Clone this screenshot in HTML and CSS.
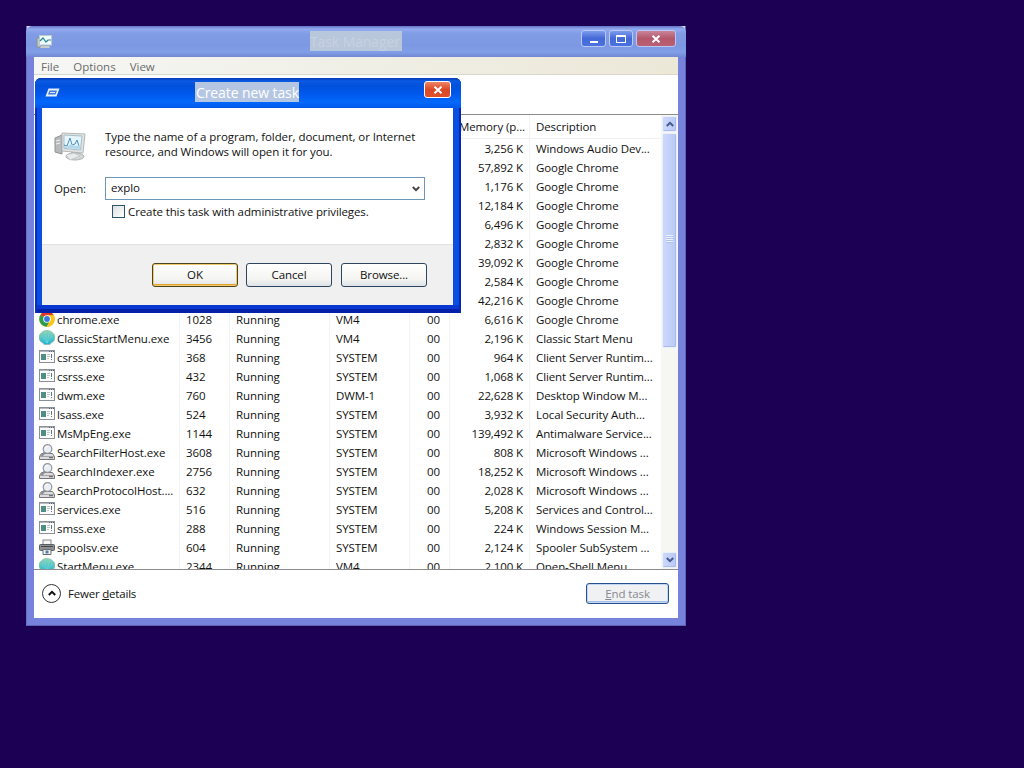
FILE: index.html
```html
<!DOCTYPE html>
<html lang="en">
<head>
  <meta charset="UTF-8" />
  <title>Task Manager</title>
  <link rel="stylesheet" href="styles.css">
</head>
<body>

<!-- Shared icons -->
<svg class="defs" width="0" height="0">
  <defs>
    <linearGradient id="teal" x1="0" y1="0" x2="0" y2="1">
      <stop offset="0" stop-color="#8fd8b8"/><stop offset="1" stop-color="#1fb4d2"/>
    </linearGradient>
    <symbol id="i-chrome" viewBox="0 0 16 16">
      <circle cx="8" cy="8" r="7.8" fill="#f9c51d"/>
      <path d="M8 8L1.3 4.1A7.8 7.8 0 0 1 14.8 4.3H8z" fill="#dc3a2c"/>
      <path d="M8 8L1.3 4.1A7.8 7.8 0 0 0 7.6 15.8L11.2 9.8z" fill="#2c9c4c"/>
      <path d="M8 4.3h6.8A7.8 7.8 0 0 1 7.6 15.8L11.2 9.8z" fill="#f9c51d"/>
      <circle cx="8" cy="8" r="3.8" fill="#fff"/>
      <circle cx="8" cy="8" r="2.9" fill="#3b78dc"/>
    </symbol>
    <symbol id="i-shell" viewBox="0 0 16 16">
      <path d="M5 14.500L4 13C-1 11-1 5 2.500 2.800C5-.3 11-.3 13.500 2.800C17 5 17 11 12 13L11 14.500z" fill="url(#teal)" stroke="#86b9a4" stroke-width=".7"/>
      <path d="M8 13L3 6M8 13L6 4M8 13L10 4M8 13L13 6" stroke="#7fdfe4" stroke-width=".5" fill="none"/>
    </symbol>
    <symbol id="i-app" viewBox="0 0 16 13">
      <rect x=".5" y=".5" width="15" height="12" fill="#fbfbfb" stroke="#8b9199"/>
      <path d="M1 1.500h14" stroke="#b4b9c0"/>
      <path d="M10 1.500h1M12 1.500h1M14 1.500h1" stroke="#5c626b"/>
      <rect x="2" y="4" width="5" height="6" fill="#4f8f83"/>
      <path d="M8 4.500h3M8 6.500h3M8 8.500h2" stroke="#bcc4c8"/>
      <path d="M12.500 4v4M12.500 9v1" stroke="#5d7a80"/>
    </symbol>
    <symbol id="i-search" viewBox="0 0 16 16">
      <path d="M2.500 9.500h11l2 3v3H.5v-3z" fill="#dcdcdf" stroke="#77777b"/>
      <path d="M1 12.500h14" stroke="#a5a5a8"/>
      <path d="M10 13.700h4" stroke="#555"/>
      <path d="M6 8L2.500 12" stroke="#8c8c90" stroke-width="2"/>
      <circle cx="8.500" cy="5" r="4.300" fill="#e9eff4" stroke="#92969c" stroke-width="1.200"/>
      <path d="M6 4.500a2.700 2.700 0 0 1 3-2" stroke="#fff" fill="none"/>
    </symbol>
    <symbol id="i-printer" viewBox="0 0 16 16">
      <rect x="4" y="1" width="8" height="5" fill="#f6f6f6" stroke="#8a8a8a"/>
      <rect x=".5" y="5.500" width="15" height="6" rx="1" fill="#8d9092" stroke="#5b5e60"/>
      <path d="M2 7.500h12" stroke="#44474a"/>
      <path d="M4 10.500h8v5H4z" fill="#eef3f7" stroke="#6a6d70"/>
      <rect x="6.500" y="11.500" width="3" height="3" fill="#5480a0"/>
    </symbol>
    <symbol id="i-x" viewBox="0 0 10 8">
      <path d="M1.500 .8L8.500 7.200M8.500 .8L1.500 7.200" stroke="#fff" stroke-width="2.100"/>
    </symbol>
    <symbol id="i-chev" viewBox="0 0 8 6">
      <path d="M.8 1L4 4.200L7.200 1" fill="none" stroke="currentColor" stroke-width="2"/>
    </symbol>
  </defs>
</svg>

<div class="window">
  <div class="titlebar">
    <svg class="title-icon" width="16" height="15" viewBox="0 0 16 15">
      <path d="M1 4h4v9H1z" fill="#c8c8c4" stroke="#8b9098"/>
      <path d="M5 12h8l1 2H4z" fill="#c9ccc8"/>
      <rect x="3.500" y="1.500" width="12" height="9.500" fill="#eefcfc" stroke="#b9c9cf"/>
      <path d="M4 7l3-3 3 4 2-2h3" fill="none" stroke="#2a8792" stroke-width="1.200"/>
    </svg>
    <span class="title">Task Manager</span>
    <div class="win-btns">
      <span class="wbtn min"><i></i></span>
      <span class="wbtn max"><i></i></span>
      <span class="wbtn close"><svg width="10" height="8"><use href="#i-x"/></svg></span>
    </div>
  </div>

  <div class="client">
    <div class="menu"><span>File</span><span>Options</span><span>View</span></div>
    <div class="tabs"></div>

    <div class="list">
      <table>
        <colgroup><col class="c-name"><col class="c-pid"><col class="c-status"><col class="c-user"><col class="c-cpu"><col class="c-mem"><col class="c-desc"></colgroup>
        <tr class="head"><th></th><th></th><th></th><th></th><th></th><th class="num">Memory (p...</th><th>Description</th></tr>
        <tr><td></td><td></td><td></td><td></td><td></td><td class="num">3,256 K</td><td>Windows Audio Dev...</td></tr>
        <tr><td></td><td></td><td></td><td></td><td></td><td class="num">57,892 K</td><td>Google Chrome</td></tr>
        <tr><td></td><td></td><td></td><td></td><td></td><td class="num">1,176 K</td><td>Google Chrome</td></tr>
        <tr><td></td><td></td><td></td><td></td><td></td><td class="num">12,184 K</td><td>Google Chrome</td></tr>
        <tr><td></td><td></td><td></td><td></td><td></td><td class="num">6,496 K</td><td>Google Chrome</td></tr>
        <tr><td></td><td></td><td></td><td></td><td></td><td class="num">2,832 K</td><td>Google Chrome</td></tr>
        <tr><td></td><td></td><td></td><td></td><td></td><td class="num">39,092 K</td><td>Google Chrome</td></tr>
        <tr><td></td><td></td><td></td><td></td><td></td><td class="num">2,584 K</td><td>Google Chrome</td></tr>
        <tr><td></td><td></td><td></td><td></td><td></td><td class="num">42,216 K</td><td>Google Chrome</td></tr>
        <tr><td><svg class="ico"><use href="#i-chrome"/></svg>chrome.exe</td><td>1028</td><td>Running</td><td>VM4</td><td class="cpu">00</td><td class="num">6,616 K</td><td>Google Chrome</td></tr>
        <tr><td><svg class="ico"><use href="#i-shell"/></svg>ClassicStartMenu.exe</td><td>3456</td><td>Running</td><td>VM4</td><td class="cpu">00</td><td class="num">2,196 K</td><td>Classic Start Menu</td></tr>
        <tr><td><svg class="ico app"><use href="#i-app"/></svg>csrss.exe</td><td>368</td><td>Running</td><td>SYSTEM</td><td class="cpu">00</td><td class="num">964 K</td><td>Client Server Runtim...</td></tr>
        <tr><td><svg class="ico app"><use href="#i-app"/></svg>csrss.exe</td><td>432</td><td>Running</td><td>SYSTEM</td><td class="cpu">00</td><td class="num">1,068 K</td><td>Client Server Runtim...</td></tr>
        <tr><td><svg class="ico app"><use href="#i-app"/></svg>dwm.exe</td><td>760</td><td>Running</td><td>DWM-1</td><td class="cpu">00</td><td class="num">22,628 K</td><td>Desktop Window M...</td></tr>
        <tr><td><svg class="ico app"><use href="#i-app"/></svg>lsass.exe</td><td>524</td><td>Running</td><td>SYSTEM</td><td class="cpu">00</td><td class="num">3,932 K</td><td>Local Security Auth...</td></tr>
        <tr><td><svg class="ico app"><use href="#i-app"/></svg>MsMpEng.exe</td><td>1144</td><td>Running</td><td>SYSTEM</td><td class="cpu">00</td><td class="num">139,492 K</td><td>Antimalware Service...</td></tr>
        <tr><td><svg class="ico"><use href="#i-search"/></svg>SearchFilterHost.exe</td><td>3608</td><td>Running</td><td>SYSTEM</td><td class="cpu">00</td><td class="num">808 K</td><td>Microsoft Windows ...</td></tr>
        <tr><td><svg class="ico"><use href="#i-search"/></svg>SearchIndexer.exe</td><td>2756</td><td>Running</td><td>SYSTEM</td><td class="cpu">00</td><td class="num">18,252 K</td><td>Microsoft Windows ...</td></tr>
        <tr><td><svg class="ico"><use href="#i-search"/></svg>SearchProtocolHost....</td><td>632</td><td>Running</td><td>SYSTEM</td><td class="cpu">00</td><td class="num">2,028 K</td><td>Microsoft Windows ...</td></tr>
        <tr><td><svg class="ico app"><use href="#i-app"/></svg>services.exe</td><td>516</td><td>Running</td><td>SYSTEM</td><td class="cpu">00</td><td class="num">5,208 K</td><td>Services and Control...</td></tr>
        <tr><td><svg class="ico app"><use href="#i-app"/></svg>smss.exe</td><td>288</td><td>Running</td><td>SYSTEM</td><td class="cpu">00</td><td class="num">224 K</td><td>Windows Session M...</td></tr>
        <tr><td><svg class="ico"><use href="#i-printer"/></svg>spoolsv.exe</td><td>604</td><td>Running</td><td>SYSTEM</td><td class="cpu">00</td><td class="num">2,124 K</td><td>Spooler SubSystem ...</td></tr>
        <tr><td><svg class="ico"><use href="#i-shell"/></svg>StartMenu.exe</td><td>2344</td><td>Running</td><td>VM4</td><td class="cpu">00</td><td class="num">2,100 K</td><td>Open-Shell Menu</td></tr>
      </table>
      <div class="scroll">
        <span class="arrow up"><svg width="8" height="6"><use href="#i-chev"/></svg></span>
        <span class="thumb"><i></i></span>
        <span class="arrow down"><svg width="8" height="6"><use href="#i-chev"/></svg></span>
      </div>
    </div>

    <div class="bottom">
      <span class="circle"><svg width="8" height="6"><use href="#i-chev"/></svg></span>
      <span class="fewer">Fewer <u>d</u>etails</span>
      <span class="btn end"><u>E</u>nd task</span>
    </div>
  </div>
</div>

<!-- Run dialog -->
<div class="dialog">
  <div class="dlg-title">
    <svg class="dlg-icon" width="15" height="9" viewBox="0 0 15 9">
      <path d="M3.500 .5h11l-3 8H.5z" fill="#e6f0ff"/>
      <path d="M4.500 2.500h7.500l-1.500 4H3z" fill="#3f78d8"/>
      <path d="M5 4.500h5" stroke="#dfeaff"/>
    </svg>
    <span class="title">Create new task</span>
    <span class="dlg-close"><svg width="10" height="8"><use href="#i-x"/></svg></span>
  </div>
  <div class="dlg-body">
    <div class="intro">
      <svg class="pc" width="32" height="30" viewBox="0 0 32 30">
        <path d="M1 7l7-3v19l-7-2z" fill="#b7b9ba" stroke="#909394"/>
        <path d="M2 10l4-1M2 13l4-1" stroke="#f4f4f4"/>
        <path d="M8 2l23 1-2 19-21-2z" fill="#e2e4e4" stroke="#b3b7b8"/>
        <path d="M10 4l18 1-1.500 14L10 17.500z" fill="#e6f4fb" stroke="#a9bdc8"/>
        <path d="M10 14l3 1 3-8 2 7 3-1 2-4 2 6" fill="none" stroke="#4d90b8"/>
        <path d="M10 15l3 1 4-3 4 2 5-1v4l-16-1z" fill="#b4d8eb"/>
        <path d="M17 21h5l1 3h-6z" fill="#b5b8b9"/>
        <ellipse cx="21" cy="25.500" rx="9" ry="3.500" fill="#d3d6d7" stroke="#b0b3b4"/>
        <path d="M12 24l8-2 6 3-10 4z" fill="#e9ebeb" stroke="#b8bbbc" stroke-width=".6"/>
      </svg>
      <p>Type the name of a program, folder, document, or Internet<br>resource, and Windows will open it for you.</p>
    </div>
    <div class="open-row">
      <label>Open:</label>
      <div class="combo"><span>explo</span><svg width="8" height="6"><use href="#i-chev"/></svg></div>
    </div>
    <div class="check-row"><span class="check"></span><span class="check-text">Create this task with administrative privileges.</span></div>
  </div>
  <div class="dlg-foot">
    <span class="btn ok">OK</span>
    <span class="btn">Cancel</span>
    <span class="btn browse">Browse...</span>
  </div>
</div>

</body>
</html>
```
FILE: styles.css
```css
* { margin: 0; padding: 0; box-sizing: border-box; }
body {
  width: 1024px;
  height: 768px;
  overflow: hidden;
  background: #1b0054;
  font-family: "Open Sans", "Noto Sans", sans-serif;
  font-size: 11.5px;
  letter-spacing: -0.1px;
  color: #111;
}
svg { display: block; }
.defs { position: absolute; }

/* Task Manager window */
.window {
  position: absolute;
  left: 26px;
  top: 26px;
  width: 660px;
  height: 600px;
  padding: 0 8px 8px;
  background: linear-gradient(#dcdcf0, #dcdcf0) 0 0 / 100% 5px no-repeat #7682dc;
  box-shadow: inset 1px 0 #6671c4, inset -1px -1px #5a63b4;
  display: flex;
  flex-direction: column;
}
.titlebar {
  height: 31px;
  margin: 0 -8px;
  padding: 0 10px;
  display: flex;
  align-items: flex-start;
  border-radius: 6px 6px 0 0;
  background: linear-gradient(#6274c4 0, #92aaf0 3px, #809ce4 8px, #7c98e2 20px, #819fe8 26px, #7287d2 31px);
}
.title-icon { margin-top: 8px; }
.title {
  color: #fff;
  background: #b4c6e2;
  font-size: 14px;
  line-height: 21px;
  height: 20px;
  white-space: nowrap;
}
.window .title {
  width: 92px;
  margin: 5px 0 0 258px;
  background: #b9c7dc;
  color: #c8d1df;
}
.win-btns { display: flex; margin: 4px 0 0 auto; }
.wbtn {
  height: 17px;
  border: 1px solid #b9c8f4;
  border-radius: 3px;
  background: linear-gradient(#7d9cec, #4468d6 50%, #4a74e0);
  display: flex;
  align-items: center;
  justify-content: center;
}
.min { width: 25px; margin-right: 3px; }
.min i { width: 8px; height: 2px; background: #fff; margin-top: 7px; }
.max { width: 24px; margin-right: 3px; }
.max i { width: 10px; height: 8px; border: 1px solid #fff; border-top-width: 2px; }
.close { width: 40px; background: linear-gradient(#c98499, #b4576b 50%, #bb6072); }

.client { flex: 1; background: #fff; display: flex; flex-direction: column; }
.menu {
  height: 18px;
  display: flex;
  gap: 14px;
  padding-left: 7px;
  line-height: 19px;
  letter-spacing: 0;
  color: #6b6b6b;
  background: linear-gradient(90deg, #f6f7f5, #f0efe6 50%, #ece8d8);
  border-bottom: 1px solid #d9d7cc;
}
.tabs { height: 39px; }
.list {
  height: 456px;
  border-top: 1px solid #8b8b8b;
  border-bottom: 1px solid #8b8b8b;
  display: flex;
  overflow: hidden;
}
table { width: 627px; border-spacing: 0; table-layout: fixed; align-self: flex-start; }
.c-name { width: 146px; }
.c-pid { width: 50px; }
.c-status { width: 100px; }
.c-user { width: 80px; }
.c-cpu { width: 40px; }
.c-mem { width: 80px; }
tr { height: 19px; }
th, td {
  height: 19px;
  padding-left: 6px;
  line-height: 19px;
  font-weight: normal;
  text-align: left;
  white-space: nowrap;
  border-right: 1px solid #f3f3f3;
}
th:last-child, td:last-child { border-right: none; }
.head th { height: 24px; border-bottom: 1px solid #f0f0f0; }
td:first-child { padding-left: 5px; }
.num, .cpu { text-align: right; padding: 0 6px 0 0; }
th.num { padding-right: 4px; }
.cpu { padding-right: 9px; }
.ico { width: 16px; height: 16px; float: left; margin: 1px 2px 0 0; }
.ico.app { height: 13px; margin-top: 2px; }

.scroll { width: 17px; padding: 1px; background: #f6f6f2; display: flex; flex-direction: column; }
.arrow, .thumb {
  background: linear-gradient(90deg, #cdd9fb, #b9c9f6);
  border: 1px solid #e9effe;
  border-radius: 2px;
  display: flex;
  align-items: center;
  justify-content: center;
  box-shadow: inset -1px -1px #a9bbe9;
}
.arrow { height: 16px; color: #45598f; }
.up svg { transform: rotate(180deg); }
.thumb { height: 215px; margin-top: 1px; }
.thumb i { width: 7px; height: 8px; margin-bottom: 3px; background: repeating-linear-gradient(#eef3ff 0 1px, #b0c2f2 1px 2px); }
.down { margin-top: auto; }

.bottom { flex: 1; display: flex; align-items: center; padding: 0 9px 2px 8px; }
.circle {
  width: 19px;
  height: 19px;
  border: 1px solid #333;
  border-radius: 50%;
  display: flex;
  align-items: center;
  justify-content: center;
}
.circle svg { transform: rotate(180deg); }
.fewer { margin-left: 7px; letter-spacing: -0.2px; }
.btn {
  width: 86px;
  height: 24px;
  border: 1px solid #2d4660;
  border-radius: 3px;
  background: linear-gradient(#fff, #f4f4f1 70%, #dfe3e8);
  line-height: 22px;
  text-align: center;
}
.btn.end {
  width: 83px;
  height: 21px;
  margin-left: auto;
  line-height: 20px;
  color: #87898f;
  border-color: #27508c;
  background: #f0f1f3;
  box-shadow: inset 0 0 0 1px #c3d6f4, inset 0 -2px #a3bfe9;
}

/* Create new task dialog */
.dialog {
  position: absolute;
  left: 35px;
  top: 78px;
  width: 426px;
  height: 235px;
  padding: 0 8px 8px 7px;
  background: #0a4ee4;
  border-radius: 6px 6px 0 0;
  box-shadow: inset 2px 0 #0a2fc0, inset -2px 0 #0628b0, inset 0 -4px #0520a8, inset 0 -8px #0838d0;
  display: flex;
  flex-direction: column;
}
.dlg-title {
  height: 30px;
  margin: 0 -8px 0 -7px;
  padding: 0 10px;
  display: flex;
  align-items: flex-start;
  border-radius: 6px 6px 0 0;
  background: linear-gradient(#0838b4 0, #0a5ae4 3px, #0050dc 8px, #0058ec 16px, #0468fc 24px, #0058e8 30px);
}
.dlg-icon { margin-top: 10px; }
.dialog .title { margin: 4px 0 0 135px; width: 104px; padding-left: 1px; }
.dlg-close {
  width: 27px;
  height: 17px;
  margin: 3px 0 0 auto;
  border: 1px solid #fff;
  border-radius: 3px;
  background: linear-gradient(#ee8568, #dc4826 50%, #e0502c);
  display: flex;
  align-items: center;
  justify-content: center;
}
.dlg-body { height: 136px; background: #fff; padding: 21px 28px 0 12px; }
.intro { display: flex; height: 48px; }
.pc { margin-top: 2px; }
.intro p { margin-left: 19px; line-height: 15px; white-space: nowrap; letter-spacing: -0.08px; }
.open-row { display: flex; align-items: center; height: 23px; }
.open-row label { width: 51px; }
.combo {
  width: 320px;
  height: 23px;
  border: 1px solid #6d96b8;
  padding: 0 4px 0 5px;
  display: flex;
  align-items: center;
  justify-content: space-between;
}
.combo svg { color: #444; }
.combo span { margin-top: -2px; }
.check-row { display: flex; align-items: center; margin: 5px 0 0 58px; height: 13px; }
.check { width: 13px; height: 13px; border: 1px solid #2f5468; background: linear-gradient(135deg, #dcdfe0, #fff); }
.check-text { margin-left: 3px; white-space: nowrap; }
.dlg-foot {
  flex: 1;
  background: #f0f0f0;
  border-top: 1px solid #e2e2e2;
  display: flex;
  align-items: flex-start;
  gap: 8px;
  padding: 18px 0 0 110px;
}
.btn.ok { border-color: #4a4420; box-shadow: inset 0 0 0 1px #f0ca6c, inset 0 -2px #e4a32c; }
.btn.browse { margin-left: 1px; }
```
